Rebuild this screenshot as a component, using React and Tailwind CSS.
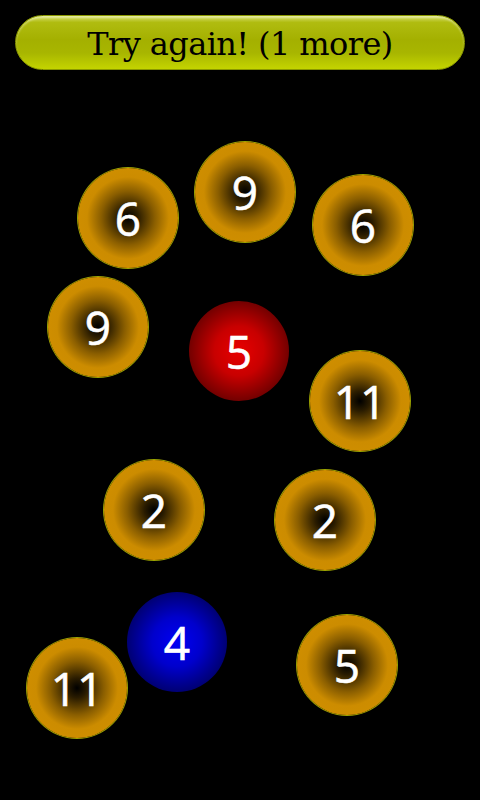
const balls = [
  { n: '6', x: 128, y: 218, kind: 'orange' },
  { n: '9', x: 245, y: 192, kind: 'orange' },
  { n: '6', x: 363, y: 225, kind: 'orange' },
  { n: '9', x: 98, y: 327, kind: 'orange' },
  { n: '5', x: 239, y: 351, kind: 'red' },
  { n: '11', x: 360, y: 401, kind: 'orange' },
  { n: '2', x: 154, y: 510, kind: 'orange' },
  { n: '2', x: 325, y: 520, kind: 'orange' },
  { n: '4', x: 177, y: 642, kind: 'blue' },
  { n: '5', x: 347, y: 665, kind: 'orange' },
  { n: '11', x: 77, y: 688, kind: 'orange' },
]

const look = {
  orange:
    'bg-[radial-gradient(circle,#000_0%,#2a1c00_14%,#8a5e00_38%,#cc8c00_58%,#d49200_100%)] ring-1 ring-[#9aa000]',
  red: 'bg-[radial-gradient(circle,#e80000_0%,#c80000_35%,#700000_72%,#200000_100%)]',
  blue: 'bg-[radial-gradient(circle,#0000f4_0%,#0000cc_35%,#000070_72%,#000020_100%)]',
}

export default function App() {
  return (
    <div className="relative h-[800px] w-[480px] overflow-hidden bg-black">
      <div className="px-[15px] pt-[15px]">
        <div className="flex h-[55px] items-center justify-center rounded-full border border-[#8a9800] bg-[linear-gradient(#d8e070_0%,#b0bc10_12%,#a4b000_45%,#a8b600_70%,#c4d400_100%)] shadow-[inset_0_2px_2px_rgba(255,255,255,0.35)]">
          <span className="pt-[3px] text-[32px] leading-none text-black [font-family:'DejaVu_Serif','Liberation_Serif',serif] tracking-[-0.6px]">
            Try again! (1 more)
          </span>
        </div>
      </div>

      {balls.map((b, i) => (
        <div
          key={i}
          className={`absolute flex h-[100px] w-[100px] items-center justify-center rounded-full ${look[b.kind]}`}
          style={{ left: b.x - 50, top: b.y - 50 }}
        >
          <span className="text-[46px] leading-none text-white [font-family:'Open_Sans','Noto_Sans',sans-serif] [-webkit-text-stroke:0.6px_white]">
            {b.n}
          </span>
        </div>
      ))}
    </div>
  )
}
